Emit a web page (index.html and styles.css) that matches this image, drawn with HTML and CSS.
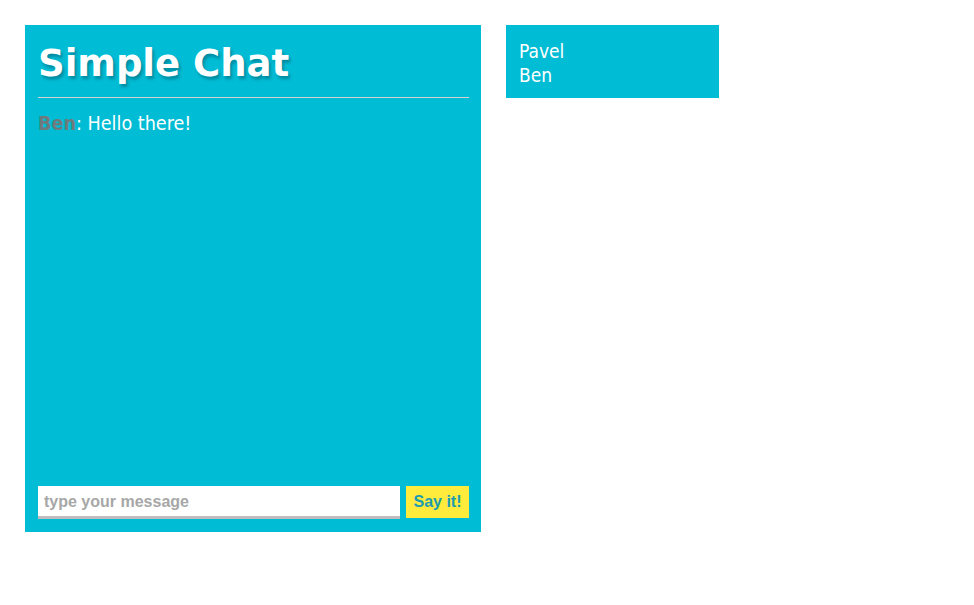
FILE: index.html
```html
<!DOCTYPE html>
<html>
<head>
<meta charset="utf-8">
<link rel="stylesheet" href="styles.css">
</head>
<body>
<div class="page">
  <div class="chat">
    <h1 class="title">Simple Chat</h1>
    <div class="rule"></div>
    <div class="messages">
      <div class="msg"><span class="author">Ben</span>: Hello there!</div>
    </div>
    <form class="composer">
      <input class="input" type="text" placeholder="type your message">
      <button class="send" type="button">Say it!</button>
    </form>
  </div>
  <div class="users">
    <div class="user">Pavel</div>
    <div class="user">Ben</div>
  </div>
</div>
</body>
</html>
```
FILE: styles.css
```css
html, body { margin: 0; padding: 0; background: #fff; }
.page {
  display: flex;
  align-items: flex-start;
  gap: 25px;
  padding: 25px;
}
.chat {
  box-sizing: border-box;
  width: 456px;
  height: 507px;
  background: #00bcd4;
  padding: 16px 12px 13px 13px;
  display: flex;
  flex-direction: column;
}
.title {
  margin: 0;
  font-family: "DejaVu Sans", Verdana, sans-serif;
  font-weight: bold;
  font-size: 37px;
  line-height: 46px;
  color: #fff;
  text-shadow: 2px 3px 3px rgba(0, 80, 100, 0.45);
}
.rule {
  height: 1px;
  background: #d9cfcf;
  margin-top: 10px;
}
.messages {
  flex: 1;
  padding-top: 14px;
  font-family: "DejaVu Sans Condensed", "DejaVu Sans", Tahoma, sans-serif;
  font-size: 19.6px;
  color: #fff;
}
.author { color: #6e7a7c; font-weight: bold; }
.composer {
  margin: 0;
  display: flex;
  gap: 6px;
  align-items: flex-start;
}
.input {
  box-sizing: border-box;
  width: 362px;
  height: 33px;
  border: none;
  border-bottom: 3px solid #bdbdbd;
  padding: 1px 6px 0;
  font-family: "Liberation Sans", Arial, sans-serif;
  font-weight: bold;
  font-size: 16px;
  color: #555;
  outline: none;
}
.input::placeholder { color: #a7a7a7; }
.send {
  box-sizing: border-box;
  width: 63px;
  height: 32px;
  border: none;
  background: #ffeb3b;
  color: #1c9bb0;
  font-family: "Liberation Sans", Arial, sans-serif;
  font-weight: bold;
  font-size: 16px;
  padding: 0;
}
.users {
  box-sizing: border-box;
  width: 213px;
  height: 73px;
  background: #00bcd4;
  padding: 14px 13px 0;
  font-family: "DejaVu Sans Condensed", "DejaVu Sans", Tahoma, sans-serif;
  font-size: 19px;
  line-height: 24px;
  color: #fff;
}
```
